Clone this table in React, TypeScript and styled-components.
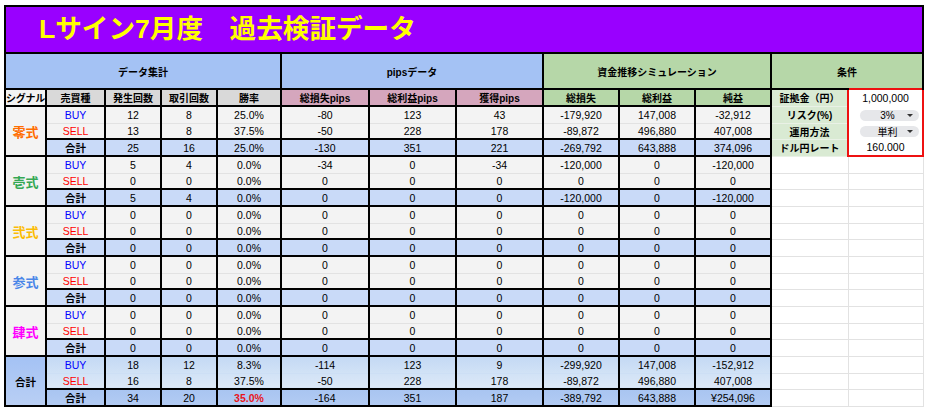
import React from "react";
import styled, { createGlobalStyle } from "styled-components";

type Kind = "buy" | "sell" | "sum";
type Tone = "blue" | "green" | "gray" | "light" | "pink";

const tones: Record<Tone, string> = {
  blue: "#a4c2f4",
  green: "#b6d7a8",
  gray: "#d9d9d9",
  light: "#f3f3f3",
  pink: "#d5a6bd",
};

const widths = [41, 59, 56, 56, 64, 88, 87, 87, 76, 76, 76, 77, 75];

type Group = { name: string; color: string; rows: string[][] };

const groups: Group[] = [
  {
    name: "零式",
    color: "#ff6d01",
    rows: [
      ["BUY", "12", "8", "25.0%", "-80", "123", "43", "-179,920", "147,008", "-32,912"],
      ["SELL", "13", "8", "37.5%", "-50", "228", "178", "-89,872", "496,880", "407,008"],
      ["合計", "25", "16", "25.0%", "-130", "351", "221", "-269,792", "643,888", "374,096"],
    ],
  },
  {
    name: "壱式",
    color: "#34a853",
    rows: [
      ["BUY", "5", "4", "0.0%", "-34", "0", "-34", "-120,000", "0", "-120,000"],
      ["SELL", "0", "0", "0.0%", "0", "0", "0", "0", "0", "0"],
      ["合計", "5", "4", "0.0%", "0", "0", "0", "-120,000", "0", "-120,000"],
    ],
  },
  { name: "弐式", color: "#fbbc04", rows: zeroRows() },
  { name: "参式", color: "#4a86e8", rows: zeroRows() },
  { name: "肆式", color: "#ff00ff", rows: zeroRows() },
];

const totals = [
  ["BUY", "18", "12", "8.3%", "-114", "123", "9", "-299,920", "147,008", "-152,912"],
  ["SELL", "16", "8", "37.5%", "-50", "228", "178", "-89,872", "496,880", "407,008"],
  ["合計", "34", "20", "35.0%", "-164", "351", "187", "-389,792", "643,888", "¥254,096"],
];

const conditions = [
  { label: "証拠金（円）", value: "1,000,000" },
  { label: "リスク(%)", chip: "3%" },
  { label: "運用方法", chip: "単利" },
  { label: "ドル円レート", value: "160.000" },
];

function zeroRows() {
  return ["BUY", "SELL", "合計"].map((t) => [t, "0", "0", "0.0%", "0", "0", "0", "0", "0", "0"]);
}

const kinds: Kind[] = ["buy", "sell", "sum"];
const heights = [17, 16, 17];

export default function App() {
  return (
    <>
      <GlobalStyle />
      <Sheet>
        <Grid>
          <colgroup>
            {widths.map((w, i) => (
              <Col key={i} $w={w} />
            ))}
          </colgroup>
          <tbody>
            <Row $h={47}>
              <TitleCell colSpan={13}>Lサイン7月度　過去検証データ</TitleCell>
            </Row>
            <Row $h={36}>
              <GroupHead colSpan={5} $tone="blue">データ集計</GroupHead>
              <GroupHead colSpan={3} $tone="blue">pipsデータ</GroupHead>
              <GroupHead colSpan={3} $tone="green">資金推移シミュレーション</GroupHead>
              <GroupHead colSpan={2} $tone="green" $thinBottom>条件</GroupHead>
            </Row>
            <Row $h={17}>
              <ColHead $tone="light" $tight>シグナル</ColHead>
              <ColHead $tone="gray">売買種</ColHead>
              <ColHead $tone="gray">発生回数</ColHead>
              <ColHead $tone="gray">取引回数</ColHead>
              <ColHead $tone="gray">勝率</ColHead>
              <ColHead $tone="pink">総損失pips</ColHead>
              <ColHead $tone="pink">総利益pips</ColHead>
              <ColHead $tone="pink">獲得pips</ColHead>
              <ColHead $tone="green">総損失</ColHead>
              <ColHead $tone="green">総利益</ColHead>
              <ColHead $tone="green">純益</ColHead>
              <CondLabel $first>{conditions[0].label}</CondLabel>
              <CondValue $first>{conditions[0].value}</CondValue>
            </Row>
            {groups.map((g, gi) =>
              g.rows.map((row, ri) => {
                const idx = gi * 3 + ri;
                const cond = conditions[idx + 1];
                return (
                  <Row key={`${gi}-${ri}`} $h={heights[ri]}>
                    {ri === 0 && (
                      <SignalCell rowSpan={3} $color={g.color}>
                        {g.name}
                      </SignalCell>
                    )}
                    <DataRowCells row={row} kind={kinds[ri]} />
                    {cond ? (
                      <>
                        <CondLabel>{cond.label}</CondLabel>
                        <CondValue $last={idx === 2}>
                          {cond.chip ? (
                            <Chip>
                              <ChipText>{cond.chip}</ChipText>
                              <Caret />
                            </Chip>
                          ) : (
                            cond.value
                          )}
                        </CondValue>
                      </>
                    ) : (
                      <>
                        <Blank />
                        <Blank />
                      </>
                    )}
                  </Row>
                );
              })
            )}
            {totals.map((row, ri) => (
              <Row key={`t-${ri}`} $h={heights[ri]}>
                {ri === 0 && <TotalSignal rowSpan={3}>合計</TotalSignal>}
                <DataRowCells row={row} kind={kinds[ri]} total />
                <Blank />
                <Blank />
              </Row>
            ))}
          </tbody>
        </Grid>
      </Sheet>
    </>
  );
}

function DataRowCells({ row, kind, total = false }: { row: string[]; kind: Kind; total?: boolean }) {
  const [type, ...values] = row;
  const typeColor = type === "BUY" ? "#0000ff" : type === "SELL" ? "#ff0000" : "#000";
  return (
    <>
      <Cell $kind={kind} $total={total} $color={typeColor} $bold={type === "合計"}>
        {type}
      </Cell>
      {values.map((v, i) => {
        const alert = total && kind === "sum" && i === 2;
        return (
          <Cell key={i} $kind={kind} $total={total} $color={alert ? "#e8141b" : undefined} $bold={alert}>
            {v}
          </Cell>
        );
      })}
    </>
  );
}

// Styled components
const GlobalStyle = createGlobalStyle`
  body {
    margin: 0;
    background: #fff;
    font-family: "Liberation Sans", "Noto Sans CJK JP", Arial, sans-serif;
  }
`;

const Sheet = styled.div`
  padding: 5px 0 0 4px;
  width: 926px;
  height: 409px;
  box-sizing: border-box;
  overflow: hidden;
`;

const Grid = styled.table`
  border-collapse: collapse;
  table-layout: fixed;
  width: 918px;
`;

const Col = styled.col<{ $w: number }>`
  width: ${(p) => p.$w}px;
`;

const Row = styled.tr<{ $h: number }>`
  height: ${(p) => p.$h}px;
`;

const TitleCell = styled.td`
  border: 2px solid #000;
  background: #9900ff;
  color: #ffff00;
  font-family: "Liberation Sans", "Noto Sans CJK JP", sans-serif;
  font-size: 26.6px;
  font-weight: 700;
  padding: 0 0 0 33px;
  white-space: nowrap;
  line-height: 1;
`;

const GroupHead = styled.th<{ $tone: Tone; $thinBottom?: boolean }>`
  border: 2px solid #000;
  border-bottom: ${(p) => (p.$thinBottom ? "1px solid #000" : "2px solid #000")};
  background: ${(p) => tones[p.$tone]};
  font-size: 10px;
  font-weight: 700;
  padding: 0;
`;

const ColHead = styled.th<{ $tone: Tone; $tight?: boolean }>`
  border: 2px solid #000;
  background: ${(p) => tones[p.$tone]};
  font-size: 10px;
  font-weight: 700;
  padding: 0;
  white-space: nowrap;
  overflow: ${(p) => (p.$tight ? "visible" : "hidden")};
  letter-spacing: ${(p) => (p.$tight ? "-0.3px" : "0")};
`;

const rowBg = (kind: Kind, total: boolean) => {
  if (total) {
    if (kind === "buy") return "linear-gradient(180deg, #c4d9f4, #d1e2f6)";
    if (kind === "sell") return "linear-gradient(180deg, #d1e2f6, #dce8f7)";
    return "linear-gradient(180deg, #a9c5f1, #b2cbf3)";
  }
  return kind === "sum" ? "#c9daf8" : "#f3f3f3";
};

const Cell = styled.td<{ $kind: Kind; $total?: boolean; $color?: string; $bold?: boolean }>`
  border-left: 2px solid #000;
  border-right: 2px solid #000;
  border-top: ${(p) =>
    p.$kind === "sell" ? `1px solid ${p.$total ? "#cddff5" : "#e2e2e2"}` : "2px solid #000"};
  border-bottom: ${(p) =>
    p.$kind === "buy" ? `1px solid ${p.$total ? "#cddff5" : "#e2e2e2"}` : "2px solid #000"};
  background: ${(p) => rowBg(p.$kind, !!p.$total)};
  color: ${(p) => p.$color ?? "#000"};
  font-weight: ${(p) => (p.$bold ? 700 : 400)};
  font-size: ${(p) => (p.$bold && !p.$color ? "10px" : "10.5px")};
  text-align: center;
  padding: 0 2px;
  white-space: nowrap;
  overflow: hidden;
`;

const SignalCell = styled.td<{ $color: string }>`
  border: 2px solid #000;
  background: #f3f3f3;
  color: ${(p) => p.$color};
  font-size: 13px;
  font-weight: 700;
  text-align: center;
  padding: 0;
`;

const TotalSignal = styled.td`
  border: 2px solid #000;
  background: linear-gradient(180deg, #a4c2f4, #b9cff4);
  font-size: 10.5px;
  font-weight: 700;
  text-align: center;
  padding: 0;
`;

const CondLabel = styled.td<{ $first?: boolean }>`
  border-left: 2px solid #000;
  border-right: 1px solid #c9d9c3;
  border-top: ${(p) => (p.$first ? "2px solid #000" : "1px solid #e9f1e6")};
  border-bottom: 1px solid #e9f1e6;
  background: #d9ead3;
  font-size: 10px;
  font-weight: 700;
  text-align: center;
  padding: 0;
  white-space: nowrap;
`;

const CondValue = styled.td<{ $first?: boolean; $last?: boolean }>`
  border-left: 2px solid #e11;
  border-right: 2px solid #e11;
  border-top: ${(p) => (p.$first ? "2px solid #e11" : "1px solid #fff")};
  border-bottom: ${(p) => (p.$last ? "2px solid #e11" : "1px solid #fff")};
  background: #fff;
  font-size: 10.5px;
  text-align: center;
  padding: 0;
  white-space: nowrap;
`;

const Chip = styled.span`
  display: inline-flex;
  align-items: center;
  width: 59px;
  height: 11px;
  margin-left: 8px;
  border-radius: 6px;
  background: #e6e7ea;
  font-size: 10px;
  vertical-align: middle;
`;

const ChipText = styled.span`
  flex: 1;
  text-align: center;
  padding-left: 8px;
`;

const Caret = styled.span`
  width: 0;
  height: 0;
  margin-right: 6px;
  border-left: 3px solid transparent;
  border-right: 3px solid transparent;
  border-top: 3px solid #333;
`;

const Blank = styled.td`
  border: 1px solid #e2e2e2;
  background: transparent;
  padding: 0;
`;
